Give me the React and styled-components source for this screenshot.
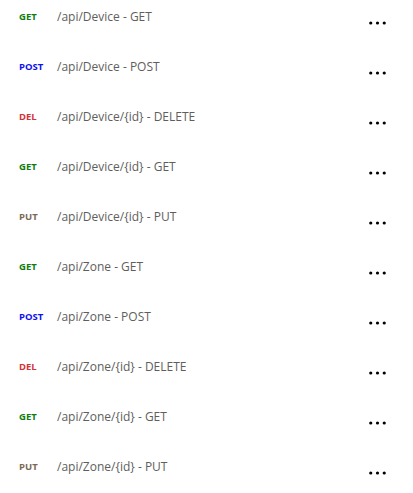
import React from 'react';
import styled, { createGlobalStyle } from 'styled-components';

const GlobalStyle = createGlobalStyle`
    body {
        margin: 0;
        background: #fff;
        font-family: "Open Sans", "Noto Sans", sans-serif;
    }
`;

const methodColors = {
    GET: '#107c10',
    POST: '#1010f0',
    DEL: '#d13438',
    PUT: '#7a6a55',
};

const StyledList = styled.ul`
    list-style: none;
    margin: 0;
    padding: 0;
    width: 413px;
`;

const StyledRow = styled.li`
    display: flex;
    align-items: flex-start;
    height: 50px;
    padding: 9px 0 0 19px;
    box-sizing: border-box;
`;

const StyledMethod = styled.span`
    width: 38px;
    flex-shrink: 0;
    font-size: 9.5px;
    font-weight: 700;
    line-height: 16px;
    color: ${(props) => methodColors[props.$method]};
`;

const StyledPath = styled.span`
    flex: 1;
    font-size: 12px;
    line-height: 16px;
    color: #605e5c;
`;

const StyledMore = styled.button`
    display: flex;
    background: transparent;
    border: none;
    padding: 0;
    margin: 12px 27px 0 0;
    cursor: pointer;
`;

const operations = [
    { method: 'GET', path: '/api/Device - GET' },
    { method: 'POST', path: '/api/Device - POST' },
    { method: 'DEL', path: '/api/Device/{id} - DELETE' },
    { method: 'GET', path: '/api/Device/{id} - GET' },
    { method: 'PUT', path: '/api/Device/{id} - PUT' },
    { method: 'GET', path: '/api/Zone - GET' },
    { method: 'POST', path: '/api/Zone - POST' },
    { method: 'DEL', path: '/api/Zone/{id} - DELETE' },
    { method: 'GET', path: '/api/Zone/{id} - GET' },
    { method: 'PUT', path: '/api/Zone/{id} - PUT' },
];

const MoreIcon = () => (
    <svg width="17" height="4" viewBox="0 0 17 4">
        <circle cx="1.75" cy="2" r="1.6" fill="#000" />
        <circle cx="8.5" cy="2" r="1.6" fill="#000" />
        <circle cx="15.25" cy="2" r="1.6" fill="#000" />
    </svg>
);

const App = () => {
    return (
        <>
            <GlobalStyle />
            <StyledList>
                {operations.map((op, i) => (
                    <StyledRow key={i}>
                        <StyledMethod $method={op.method}>{op.method}</StyledMethod>
                        <StyledPath>{op.path}</StyledPath>
                        <StyledMore aria-label="More">
                            <MoreIcon />
                        </StyledMore>
                    </StyledRow>
                ))}
            </StyledList>
        </>
    );
};

export default App;
